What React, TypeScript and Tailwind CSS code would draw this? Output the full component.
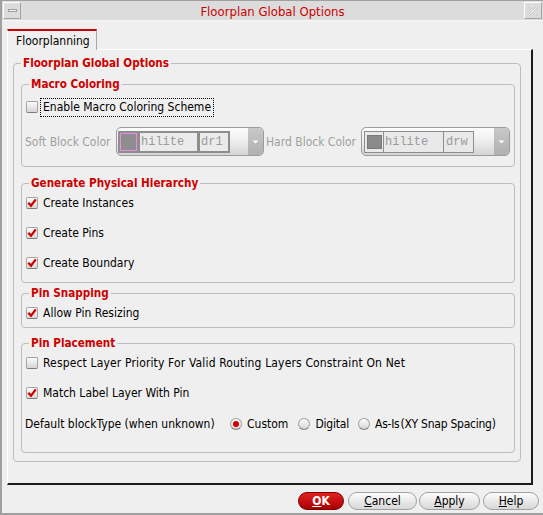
import React from "react";

function Check({ checked }: { checked?: boolean }) {
  return (
    <span className="w-[12px] h-[12px] shrink-0 rounded-[2px] border border-[#a4a4a4] border-b-[#7c7c7c] bg-gradient-to-b from-[#fbfbfb] to-[#d6d6d6] flex items-center justify-center">
      {checked && (
        <svg width="10" height="10" viewBox="0 0 10 10">
          <path d="M1.3 4.8 L4 7.8 L8.8 1.4" stroke="#d00000" strokeWidth="2.3" fill="none" />
        </svg>
      )}
    </span>
  );
}

function Radio({ checked }: { checked?: boolean }) {
  return (
    <span className="w-[12px] h-[12px] shrink-0 rounded-full border border-[#a0a0a0] border-b-[#808080] bg-gradient-to-b from-[#ffffff] to-[#d4d4d4] flex items-center justify-center">
      {checked && <span className="w-[6px] h-[6px] rounded-full bg-[#d20000]" />}
    </span>
  );
}

function Row({ checked, label, className = "", textClass = "" }: { checked?: boolean; label: string; className?: string; textClass?: string }) {
  return (
    <div className={"flex items-center h-[20px] " + className}>
      <Check checked={checked} />
      <span className={"ml-[5px] text-[12px] leading-[14px] " + textClass}>{label}</span>
    </div>
  );
}

function Arrow() {
  return (
    <div className="ml-auto w-[15px] self-stretch bg-gradient-to-b from-[#c8c8c8] to-[#b0b0b0] rounded-r-[4px] flex items-center justify-center">
      <svg width="7" height="4" viewBox="0 0 7 4">
        <path d="M0.5 0.5 L6.5 0.5 L3.5 3.5 Z" fill="#ffffff" />
      </svg>
    </div>
  );
}

function SoftCombo() {
  return (
    <div className="w-[148px] h-[29px] rounded-[5px] border border-[#9c9c9c] bg-gradient-to-b from-[#fdfdfd] via-[#ededed] to-[#d4d4d4] flex items-center pl-[1px] overflow-hidden">
      <div className="h-[22px] bg-[#8e8e8e] flex items-center pl-[2px] pr-[2px]">
        <span className="w-[17px] h-[18px] border border-[#ee88ee] bg-[#8e8e8e]" />
        <span className="ml-[3px] w-[57px] h-[18px] bg-[#ebebeb] text-[#9a9a9a] font-['Liberation_Mono',monospace] text-[12px] leading-[18px] pl-[1px]">
          hilite
        </span>
        <span className="ml-[3px] w-[28px] h-[18px] bg-[#ebebeb] text-[#9a9a9a] font-['Liberation_Mono',monospace] text-[12px] leading-[18px] pl-[1px]">
          dr1
        </span>
      </div>
      <Arrow />
    </div>
  );
}

function HardCombo() {
  return (
    <div className="w-[149px] h-[29px] rounded-[5px] border border-[#9c9c9c] bg-gradient-to-b from-[#fdfdfd] via-[#ededed] to-[#d4d4d4] flex items-center pl-[2px] overflow-hidden">
      <div className="h-[22px] border border-[#8e8e8e] flex bg-[#e9e9e9]">
        <span className="w-[19px] border-r border-[#8e8e8e] flex items-center justify-center">
          <span className="w-[15px] h-[14px] bg-[#8a8a8a] border border-[#7a7a7a]" />
        </span>
        <span className="w-[60px] border-r border-[#8e8e8e] text-[#9a9a9a] font-['Liberation_Mono',monospace] text-[12px] leading-[20px] pl-[1px]">
          hilite
        </span>
        <span className="w-[29px] text-[#9a9a9a] font-['Liberation_Mono',monospace] text-[12px] leading-[20px] pl-[2px]">
          drw
        </span>
      </div>
      <Arrow />
    </div>
  );
}

function Legend({ children, className = "" }: { children: React.ReactNode; className?: string }) {
  return (
    <legend className={"px-[2px] text-[11.6px] leading-[14px] font-bold text-[#cc0000] " + className}>{children}</legend>
  );
}

function Btn({ w, children, primary }: { w: string; children: React.ReactNode; primary?: boolean }) {
  return (
    <div
      className={
        "h-[18px] rounded-[9px] border flex items-center justify-center text-[12px] leading-[14px] " +
        w +
        (primary
          ? " border-[#7a0000] bg-gradient-to-b from-[#e42020] to-[#a80000] text-white font-bold"
          : " border-[#a2a2a2] bg-gradient-to-b from-[#fcfcfc] to-[#d8d8d8] text-black")
      }
    >
      {children}
    </div>
  );
}

export default function App() {
  return (
    <div className="w-[543px] h-[515px] bg-[#efefef] flex flex-col border-l-2 border-t border-b-2 border-[#a0a0a0] overflow-hidden font-['DejaVu_Sans',sans-serif] font-stretch-condensed text-black">
      {/* title bar */}
      <div className="h-[20px] bg-[#dcdcdc] border-b border-[#f4f4f4] flex items-center shrink-0">
        <div className="ml-[1px] w-[18px] h-[17px] border border-t-white border-l-white border-r-[#a4a4a4] border-b-[#a4a4a4] flex items-center justify-center">
          <span className="w-[9px] h-[3px] border border-[#a0a0a0] bg-[#f4f4f4]" />
        </div>
        <div className="flex-1 pt-[2px] text-center text-[13px] leading-[16px] text-[#cc0000]">Floorplan Global Options</div>
        <div className="mr-[1px] w-[18px] h-[17px] border border-t-white border-l-white border-r-[#a4a4a4] border-b-[#a4a4a4] flex items-center justify-center">
          <svg width="12" height="12" viewBox="0 0 12 12">
            <path
              d="M1.5 2.5 L2.5 1.5 L6 5 L9.5 1.5 L10.5 2.5 L7 6 L10.5 9.5 L9.5 10.5 L6 7 L2.5 10.5 L1.5 9.5 L5 6 Z"
              fill="#eeeeee"
              stroke="#a8a8a8"
              strokeWidth="0.8"
              strokeDasharray="1 1"
            />
          </svg>
        </div>
      </div>

      {/* body */}
      <div className="flex-1 flex flex-col pl-[5px] pt-[8px]">
        <div className="relative z-10 w-[90px] h-[21px] -mb-px bg-[#efefef] border-t-2 border-t-[#cc0000] border-l border-l-white border-r border-r-[#a8a8a8] flex items-center pl-[8px] text-[12px] leading-[14px]">
          Floorplanning
        </div>
        <div className="w-[526px] h-[436px] border-t border-l border-white border-r-2 border-b-2 border-r-[#1c1c1c] border-b-[#1c1c1c] pl-[5px] pr-[10px] pt-[6px]">
          <fieldset className="border border-[#bdbdbd] rounded-[4px] pl-[7px] pr-[5px] pb-[8px]">
            <Legend>Floorplan Global Options</Legend>
            <div className="pt-[7px] flex flex-col">
              {/* Macro Coloring */}
              <fieldset className="border border-[#bdbdbd] rounded-[4px] pl-[4px] pr-[4px] pt-[6px] pb-[10px]">
                <Legend className="ml-[3px]">Macro Coloring</Legend>
                <div className="flex items-center h-[20px]">
                  <Check />
                  <span className="ml-[2px] px-[2px] h-[19px] border border-dotted border-black text-[12px] leading-[17px]">
                    Enable Macro Coloring Scheme
                  </span>
                </div>
                <div className="mt-[10px] flex items-center text-[12px] leading-[14px] text-[#a0a0a0]">
                  <span className="-ml-px w-[91px]">Soft Block Color</span>
                  <SoftCombo />
                  <span className="ml-[2px] w-[95px]">Hard Block Color</span>
                  <HardCombo />
                </div>
              </fieldset>

              {/* Generate Physical Hierarchy */}
              <fieldset className="mt-[9px] border border-[#bdbdbd] rounded-[4px] pl-[4px] pr-[4px] pt-[3px] pb-[9px] flex flex-col gap-[10px]">
                <Legend className="ml-[3px]">Generate Physical Hierarchy</Legend>
                <Row checked label="Create Instances" />
                <Row checked label="Create Pins" />
                <Row checked label="Create Boundary" />
              </fieldset>

              {/* Pin Snapping */}
              <fieldset className="mt-[3px] border border-[#bdbdbd] rounded-[4px] pl-[4px] pr-[4px] pt-[3px] pb-[4px]">
                <Legend className="ml-[3px]">Pin Snapping</Legend>
                <Row checked label="Allow Pin Resizing" />
              </fieldset>

              {/* Pin Placement */}
              <fieldset className="mt-[8px] border border-[#bdbdbd] rounded-[4px] pl-[4px] pr-[4px] pt-[3px] pb-[18px]">
                <Legend className="ml-[3px]">Pin Placement</Legend>
                <Row label="Respect Layer Priority For Valid Routing Layers Constraint On Net" textClass="tracking-[0.15px]" />
                <Row checked label="Match Label Layer With Pin" className="mt-[10px]" />
                <div className="mt-[11px] flex items-center h-[20px] text-[12px] leading-[14px]">
                  <span className="-ml-px w-[205px]">Default blockType (when unknown)</span>
                  <Radio checked />
                  <span className="ml-[5px]">Custom</span>
                  <span className="ml-[10px]">
                    <Radio />
                  </span>
                  <span className="ml-[5px] tracking-[-0.2px]">Digital</span>
                  <span className="ml-[9px]">
                    <Radio />
                  </span>
                  <span className="ml-[5px] tracking-[-0.25px]">
                    As-Is<span className="ml-[1px]">(XY Snap Spacing)</span>
                  </span>
                </div>
              </fieldset>
            </div>
          </fieldset>
        </div>

        {/* buttons */}
        <div className="mt-[7px] flex justify-end pr-[4px]">
          <Btn w="w-[46px]" primary>
            <span>
              <span className="underline">O</span>K
            </span>
          </Btn>
          <div className="ml-[4px]">
            <Btn w="w-[69px]">
              <span>
                <span className="underline">C</span>ancel
              </span>
            </Btn>
          </div>
          <div className="ml-[2px]">
            <Btn w="w-[61px]">
              <span>
                <span className="underline">A</span>pply
              </span>
            </Btn>
          </div>
          <div className="ml-[3px]">
            <Btn w="w-[56px]">
              <span>
                <span className="underline">H</span>elp
              </span>
            </Btn>
          </div>
        </div>
      </div>
    </div>
  );
}
